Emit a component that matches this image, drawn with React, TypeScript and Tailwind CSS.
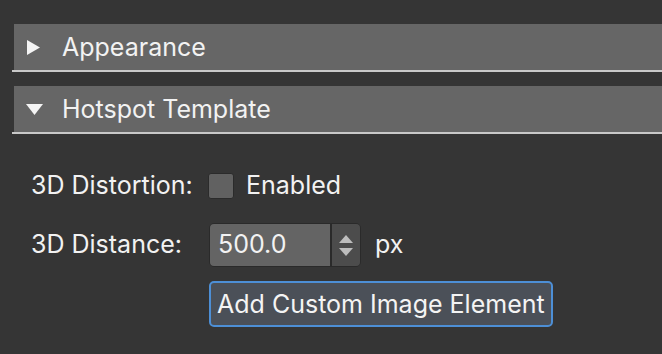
import React from 'react'

const font = { fontFamily: 'Inter, "Open Sans", sans-serif' }

function Section({ title, open }: { title: string; open: boolean }) {
  return (
    <div className="ml-[12px]">
      <div className="ml-[2px] h-[46px] bg-[#666666] flex items-center">
        <div className="w-[48px] pl-[12px] flex items-center">
          {open ? (
            <svg width="17" height="11" viewBox="0 0 17 11">
              <polygon points="0,0 17,0 8.5,11" fill="#f4f4f4" />
            </svg>
          ) : (
            <svg width="13" height="15" viewBox="0 0 13 15" className="ml-[1px]">
              <polygon points="0,0 13,7.5 0,15" fill="#f4f4f4" />
            </svg>
          )}
        </div>
        <span className="text-[25px] text-[#f2f2f2] leading-none">{title}</span>
      </div>
      <div className="h-[2px] bg-[#c9c9c9]" />
    </div>
  )
}

export default function App() {
  return (
    <div className="w-[662px] h-[354px] bg-[#353535] overflow-hidden pt-[24px]" style={font}>
      <Section title="Appearance" open={false} />
      <div className="h-[14px]" />
      <Section title="Hotspot Template" open={true} />

      <div className="pl-[31px] pt-[39px] text-[25px] text-[#f2f2f2]">
        <div className="flex items-center h-[26px]">
          <span className="w-[177px]">3D Distortion:</span>
          <div className="w-[26px] h-[26px] bg-[#616161] border border-[#2b2b2b] rounded-[3px]" />
          <span className="ml-[12px]">Enabled</span>
        </div>

        <div className="flex items-center mt-[24px]">
          <span className="w-[178px]">3D Distance:</span>
          <div className="flex w-[152px] h-[44px] rounded-[5px] border border-[#2a2a2a] overflow-hidden">
            <div className="flex-1 bg-[#646464] border-r-2 border-[#2a2a2a] flex items-center pl-[8px]">500.0</div>
            <div className="w-[28px] bg-[#4c4c4c] flex flex-col items-center justify-center gap-[5px]">
              <svg width="14" height="8" viewBox="0 0 14 8">
                <polygon points="0,8 14,8 7,0" fill="#bdbdbd" />
              </svg>
              <svg width="14" height="8" viewBox="0 0 14 8">
                <polygon points="0,0 14,0 7,8" fill="#bdbdbd" />
              </svg>
            </div>
          </div>
          <span className="ml-[14px]">px</span>
        </div>

        <div className="mt-[14px] ml-[178px]">
          <button className="h-[46px] px-[6px] rounded-[5px] border-2 border-[#4d8fd6] bg-[#4b5058] text-[25px] text-[#f4f4f4] leading-none">
            Add Custom Image Element
          </button>
        </div>
      </div>
    </div>
  )
}
